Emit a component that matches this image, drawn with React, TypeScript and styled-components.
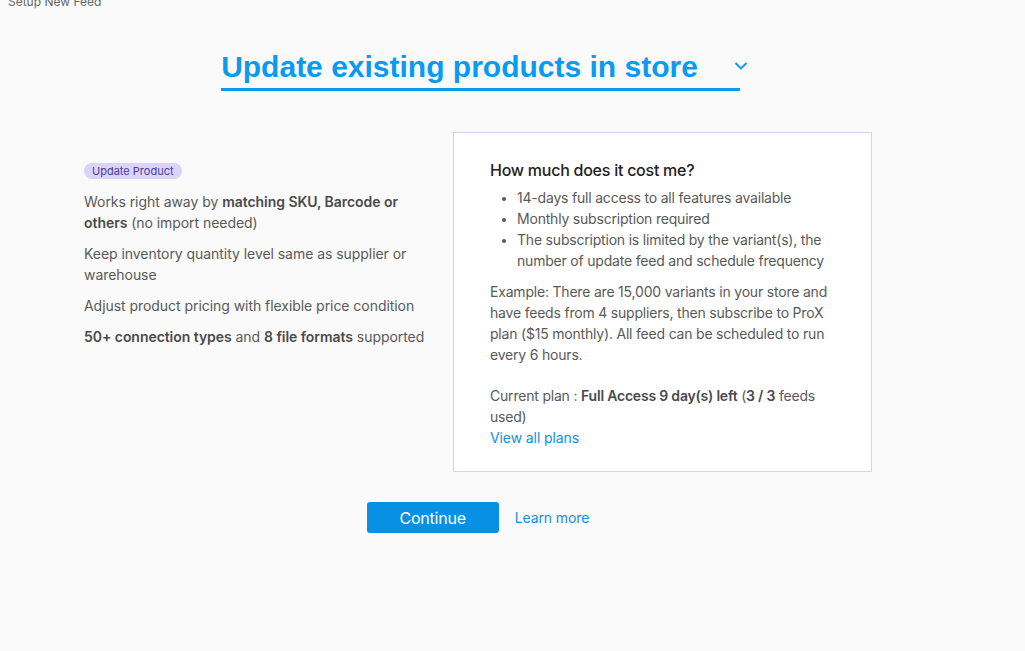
import React from 'react';
import styled, { createGlobalStyle } from 'styled-components';

const GlobalStyle = createGlobalStyle`
  html, body {
    margin: 0;
    padding: 0;
    background: #fafafa;
  }
  body {
    font-family: Inter, "Noto Sans", "Liberation Sans", sans-serif;
    color: #555;
    overflow: hidden;
  }
`;

const Page = styled.div`
  width: 960px;
  height: 651px;
  display: flex;
  flex-direction: column;
`;

const PageLabel = styled.div`
  font-size: 12px;
  line-height: 13px;
  color: #666;
  margin: -5px 0 0 8px;
`;

const HeadingWrap = styled.div`
  display: flex;
  justify-content: center;
  margin-top: 42px;
`;

const Heading = styled.h1`
  display: flex;
  align-items: center;
  margin: 0 0 0 1px;
  padding-bottom: 4px;
  border-bottom: 3px solid #0a9af0;
  font-family: "Liberation Sans", Arial, sans-serif;
  font-size: 30px;
  line-height: 34px;
  font-weight: 700;
  color: #0a9af0;
  cursor: pointer;
`;

const Chevron = styled.svg`
  margin-left: 36px;
  margin-right: -8px;
  margin-top: -2px;
  flex: none;
`;

const Row = styled.div`
  display: flex;
  align-items: flex-start;
  gap: 23px;
  margin-top: 41px;
  padding-left: 84px;
`;

const Intro = styled.div`
  width: 346px;
  padding-top: 31px;
  display: flex;
  flex-direction: column;
  gap: 10px;
`;

const Badge = styled.span`
  align-self: flex-start;
  height: 16px;
  line-height: 16px;
  padding: 0 8px;
  margin-bottom: 2px;
  border-radius: 8px;
  background: #dbd3f8;
  color: #4c3d9e;
  font-size: 11px;
`;

const Para = styled.p`
  margin: 0;
  font-size: 14px;
  line-height: 21px;
  letter-spacing: -0.05px;
  color: #595959;

  b {
    font-weight: 600;
    color: #4a4a4a;
  }
`;

const Card = styled.div`
  width: 419px;
  box-sizing: border-box;
  padding: 25px 36px 23px;
  background: #fff;
  border: 1px solid #d7d1f3;
`;

const CardTitle = styled.h2`
  margin: 0;
  font-size: 16px;
  line-height: 24px;
  font-weight: 500;
  letter-spacing: -0.25px;
  color: #222;
`;

const List = styled.ul`
  margin: 5px 0 0;
  padding-left: 27px;
  font-size: 14px;
  line-height: 21px;
  letter-spacing: -0.2px;
  color: #595959;

  li::marker {
    font-size: 12px;
  }
`;

const CardText = styled.p<{ $gap: number }>`
  margin: ${(p) => p.$gap}px 0 0;
  font-size: 14px;
  line-height: 21px;
  letter-spacing: -0.2px;
  color: #595959;

  b {
    font-weight: 600;
    color: #4a4a4a;
  }
`;

const TextLink = styled.a`
  color: #1490e2;
  text-decoration: none;
  font-size: 14px;
  line-height: 21px;
  letter-spacing: -0.1px;
  cursor: pointer;
`;

const Actions = styled.div`
  display: flex;
  justify-content: center;
  align-items: center;
  gap: 16px;
  margin-top: 30px;
  padding-right: 4px;
`;

const PrimaryButton = styled.button`
  width: 132px;
  height: 31px;
  border: none;
  border-radius: 3px;
  background: #0890e4;
  color: #fff;
  font-family: Inter, "Noto Sans", sans-serif;
  font-size: 16px;
  letter-spacing: -0.2px;
  cursor: pointer;
`;

export default function App() {
  return (
    <>
      <GlobalStyle />
      <Page>
        <PageLabel>Setup New Feed</PageLabel>
        <HeadingWrap>
          <Heading>
            Update existing products in store
            <Chevron width="14" height="10" viewBox="0 0 14 10">
              <polyline points="1.5,2 7,7.5 12.5,2" fill="none" stroke="#0a9af0" strokeWidth="1.8" />
            </Chevron>
          </Heading>
        </HeadingWrap>
        <Row>
          <Intro>
            <Badge>Update Product</Badge>
            <Para>
              Works right away by <b>matching SKU, Barcode or others</b> (no import needed)
            </Para>
            <Para>Keep inventory quantity level same as supplier or warehouse</Para>
            <Para>Adjust product pricing with flexible price condition</Para>
            <Para>
              <b>50+ connection types</b> and <b>8 file formats</b> supported
            </Para>
          </Intro>
          <Card>
            <CardTitle>How much does it cost me?</CardTitle>
            <List>
              <li>14-days full access to all features available</li>
              <li>Monthly subscription required</li>
              <li>The subscription is limited by the variant(s), the number of update feed and schedule frequency</li>
            </List>
            <CardText $gap={10}>
              Example: There are 15,000 variants in your store and have feeds from 4 suppliers, then subscribe to ProX plan ($15 monthly). All feed can be scheduled to run every 6 hours.
            </CardText>
            <CardText $gap={20}>
              Current plan : <b>Full Access 9 day(s) left</b> (<b>3 / 3</b> feeds used)
              <br />
              <TextLink>View all plans</TextLink>
            </CardText>
          </Card>
        </Row>
        <Actions>
          <PrimaryButton>Continue</PrimaryButton>
          <TextLink>Learn more</TextLink>
        </Actions>
      </Page>
    </>
  );
}
